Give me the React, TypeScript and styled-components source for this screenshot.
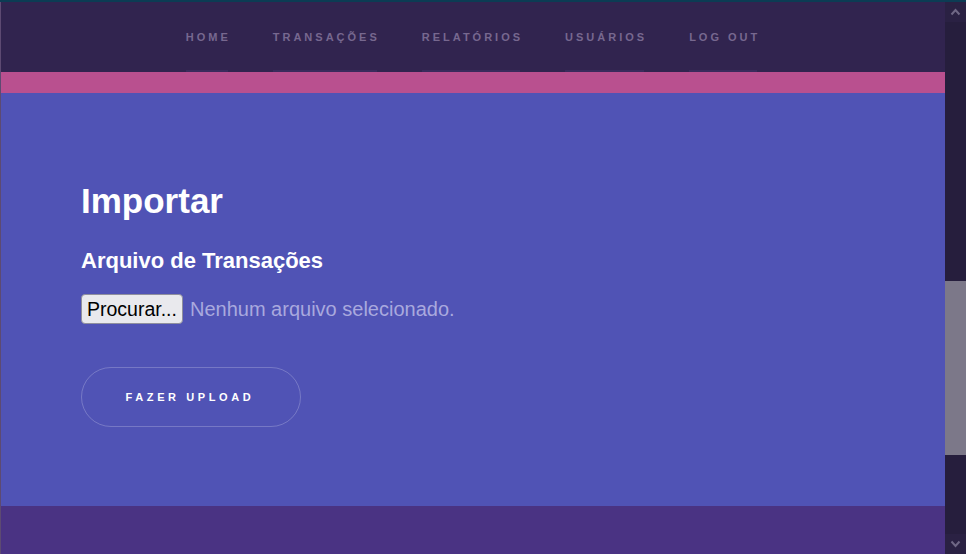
import React from "react";
import styled, { createGlobalStyle } from "styled-components";

const Global = createGlobalStyle`
  html, body { margin: 0; padding: 0; height: 100%; overflow: hidden; }
  body { font-family: "Liberation Sans", Arial, sans-serif; background: #31244f; }
  #root { height: 100%; }
`;

const Frame = styled.div`
  display: flex;
  width: 966px;
  height: 554px;
  border-top: 2px solid #0c3c54;
  box-sizing: border-box;
  overflow: hidden;
`;

const Page = styled.div`
  flex: 1;
  display: flex;
  flex-direction: column;
  border-left: 1px solid #5d4a72;
  min-width: 0;
`;

const Nav = styled.nav`
  height: 70px;
  background: #31244f;
  display: flex;
  justify-content: center;
  align-items: stretch;
  gap: 42px;
`;

const NavItem = styled.a`
  position: relative;
  display: flex;
  align-items: center;
  font-family: "Liberation Sans", Arial, sans-serif;
  font-size: 11px;
  font-weight: 700;
  letter-spacing: 3px;
  color: #77688f;
  text-decoration: none;
  text-transform: uppercase;
  &::after {
    content: "";
    position: absolute;
    left: 0;
    right: 3px;
    bottom: 0;
    height: 2px;
    background: #3a2b5c;
  }
`;

const Band = styled.div`
  height: 21px;
  background: #b9508f;
`;

const Main = styled.main`
  height: 413px;
  background: #5053b5;
  padding: 88px 80px 0;
  box-sizing: border-box;
  display: flex;
  flex-direction: column;
  align-items: flex-start;
`;

const Title = styled.h1`
  margin: 0;
  font-size: 35px;
  line-height: 40px;
  font-weight: 700;
  color: #ffffff;
`;

const Label = styled.h3`
  margin: 27px 0 0;
  font-size: 22px;
  line-height: 26px;
  font-weight: 700;
  color: #ffffff;
`;

const FileRow = styled.div`
  margin-top: 20px;
  display: flex;
  align-items: center;
  gap: 7px;
`;

const FileButton = styled.button`
  height: 30px;
  padding: 0 5px;
  background: #e9e9ed;
  border: 1px solid #8f8f9d;
  border-radius: 4px;
  font-family: "Liberation Sans", Arial, sans-serif;
  font-size: 19.5px;
  color: #000;
`;

const FileStatus = styled.span`
  font-size: 20px;
  color: #a9a9de;
`;

const UploadButton = styled.button`
  margin-top: 43px;
  width: 220px;
  height: 60px;
  border-radius: 30px;
  background: transparent;
  border: 1px solid rgba(255, 255, 255, 0.22);
  color: #ffffff;
  font-family: "Liberation Sans", Arial, sans-serif;
  font-size: 11px;
  font-weight: 700;
  letter-spacing: 3.6px;
  padding-left: 4px;
`;

const Footer = styled.footer`
  flex: 1;
  background: #4a3383;
`;

const Scrollbar = styled.div`
  width: 21px;
  background: #261e3d;
  display: flex;
  flex-direction: column;
`;

const Arrow = styled.div`
  height: 20px;
  display: flex;
  align-items: center;
  justify-content: center;
  background: #2a2143;
`;

const Track = styled.div`
  flex: 1;
  display: flex;
  flex-direction: column;
  padding-top: 259px;
`;

const Thumb = styled.div`
  height: 174px;
  background: #7c7889;
`;

const Chevron = ({ up }: { up?: boolean }) => (
  <svg width="11" height="8" viewBox="0 0 11 8">
    <path
      d={up ? "M1.5 6.5 L5.5 2 L9.5 6.5" : "M1.5 1.5 L5.5 6 L9.5 1.5"}
      fill="none"
      stroke="#6f6785"
      strokeWidth="2"
    />
  </svg>
);

export default function App() {
  const items = ["Home", "Transações", "Relatórios", "Usuários", "Log out"];
  return (
    <>
      <Global />
      <Frame>
        <Page>
          <Nav>
            {items.map((i) => (
              <NavItem key={i} href="#">
                {i}
              </NavItem>
            ))}
          </Nav>
          <Band />
          <Main>
            <Title>Importar</Title>
            <Label>Arquivo de Transações</Label>
            <FileRow>
              <FileButton>Procurar...</FileButton>
              <FileStatus>Nenhum arquivo selecionado.</FileStatus>
            </FileRow>
            <UploadButton>FAZER UPLOAD</UploadButton>
          </Main>
          <Footer />
        </Page>
        <Scrollbar>
          <Arrow>
            <Chevron up />
          </Arrow>
          <Track>
            <Thumb />
          </Track>
          <Arrow>
            <Chevron />
          </Arrow>
        </Scrollbar>
      </Frame>
    </>
  );
}
